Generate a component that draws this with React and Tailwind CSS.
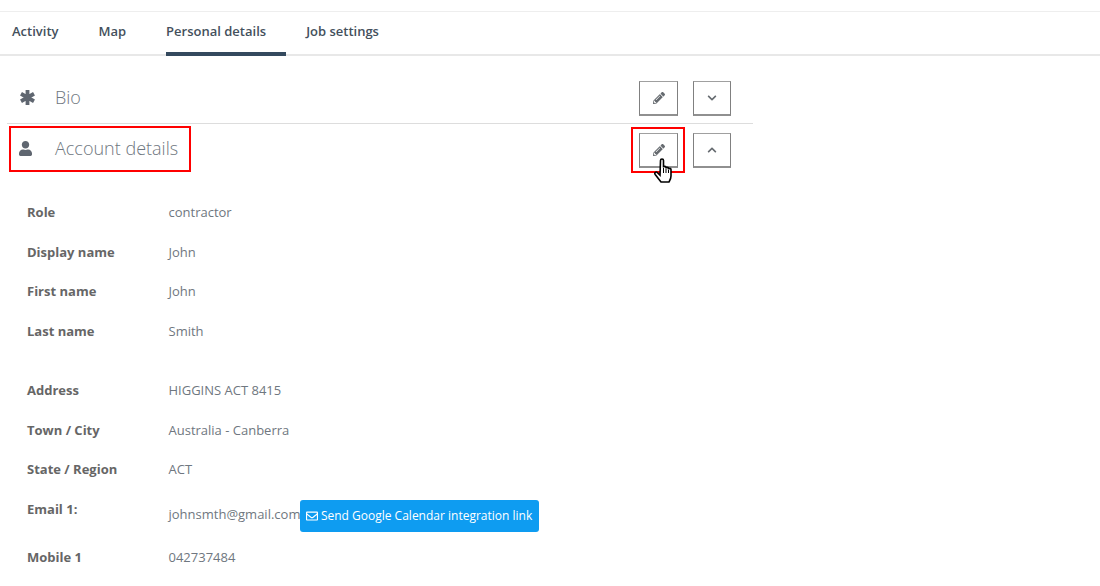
import { FaUser, FaPencilAlt, FaChevronDown, FaChevronUp, FaRegEnvelope } from "react-icons/fa";

const tabs = ["Activity", "Map", "Personal details", "Job settings"];

const firstGroup = [
  ["Role", "contractor"],
  ["Display name", "John"],
  ["First name", "John"],
  ["Last name", "Smith"],
];

const secondGroup = [
  ["Address", "HIGGINS ACT 8415"],
  ["Town / City", "Australia - Canberra"],
  ["State / Region", "ACT"],
];

const IconButton = ({ wide, children }) => (
  <button
    className={`${wide ? "w-[39px]" : "w-[38px]"} h-[35px] flex items-center justify-center border border-[#808080] border-t-[#a0a0a0] border-b-2 border-b-[#909090] bg-white text-[#666b70]`}
  >
    {children}
  </button>
);

const Row = ({ label, value }) => (
  <div className="flex items-center h-[39.5px]">
    <div className="w-[141.500px] font-bold text-[#666]">{label}</div>
    <div className="text-[#6f7780]">{value}</div>
  </div>
);

const App = () => {
  return (
    <div className="relative w-[1100px] h-[586px] overflow-hidden bg-white pt-[11px] text-[13px] font-['Open_Sans',sans-serif]">
      {/* Tabs */}
      <div className="flex h-[45px] pl-3 border-t border-t-[#eee] border-b-2 border-b-[#e8e8e8]">
        {tabs.map((tab) => (
          <div
            key={tab}
            className={`mr-5 pr-5 h-[44px] pt-[10px] font-semibold text-[#44505c] ${
              tab === "Personal details" ? "border-b-4 border-b-[#34495e]" : ""
            }`}
          >
            {tab}
          </div>
        ))}
      </div>

      {/* Bio */}
      <div className="ml-[7px] w-[746px] h-[68px] flex items-center border-b border-b-[#ddd] pt-[17px]">
        <svg className="ml-[13px] -mt-[1px]" width="15" height="15" viewBox="0 0 15 15">
          <path d="M7.500 0v15M1 3.750l13 7.500M14 3.750l-13 7.500" stroke="#5f6670" strokeWidth="3.800" />
        </svg>
        <span className="ml-5 -mt-[2px] text-[18px] font-light text-[#6f7780]">Bio</span>
        <div className="ml-auto mr-[22px] flex gap-[15px]">
          <IconButton wide><FaPencilAlt className="w-3 h-3" /></IconButton>
          <IconButton><FaChevronDown className="w-[10px] h-[10px]" /></IconButton>
        </div>
      </div>

      {/* Account details */}
      <div className="ml-[7px] w-[746px] h-[50px] flex items-center">
        <FaUser className="ml-3 -mt-[2px] w-[13px] h-[15px] text-[#5f6670]" />
        <span className="ml-[23px] -mt-[2px] text-[18px] font-light text-[#6f7780]">Account details</span>
        <div className="ml-auto mr-[22px] mt-[2px] flex gap-[15px]">
          <IconButton wide><FaPencilAlt className="w-3 h-3" /></IconButton>
          <IconButton><FaChevronUp className="w-[10px] h-[10px]" /></IconButton>
        </div>
      </div>

      <div className="pl-[27px] pt-[19px]">
        {firstGroup.map(([label, value]) => (
          <Row key={label} label={label} value={value} />
        ))}
        <div className="h-[20px]" />
        {secondGroup.map(([label, value]) => (
          <Row key={label} label={label} value={value} />
        ))}
        <div className="flex items-start h-[48px] pt-[10px]">
          <div className="w-[141.500px] font-bold text-[#666]">Email 1:</div>
          <div className="pt-[5px] text-[#6f7780]">johnsmth@gmail.com</div>
          <button className="flex items-center gap-[3px] h-[32px] -ml-[0.500px] pl-[6px] pr-[7px] rounded-[3px] bg-[#0e9cf1] text-white text-[12px]">
            <FaRegEnvelope className="w-3 h-3" />
            Send Google Calendar integration link
          </button>
        </div>
        <Row label="Mobile 1" value="042737484" />
      </div>

      {/* Annotation boxes and cursor */}
      <div className="absolute left-[9px] top-[126px] w-[182px] h-[46px] border-2 border-[#f00]" />
      <div className="absolute left-[631px] top-[127px] w-[54px] h-[46px] border-2 border-[#f00]" />
      <svg className="absolute left-[654px] top-[158px]" width="20" height="26" viewBox="0 0 20 26">
        <path
          d="M6.500 2.500c0-2 3-2 3 0v7c0-1.500 2.500-1.500 2.500 0v1c0-1.500 2.500-1.500 2.500 0v1c0-1.500 2.500-1.500 2.500 0v6.500c0 2.500-1 4-2 6h-8l-5.800-7.500c-1.200-1.800 1-3.300 2.300-1.800l2.500 2.500z"
          fill="#fff"
          stroke="#000"
          strokeWidth="1.600"
        />
        <path d="M9.500 10v5M12 11v4M14.500 12v3" stroke="#000" strokeWidth="1" />
      </svg>
    </div>
  );
};

export default App;
